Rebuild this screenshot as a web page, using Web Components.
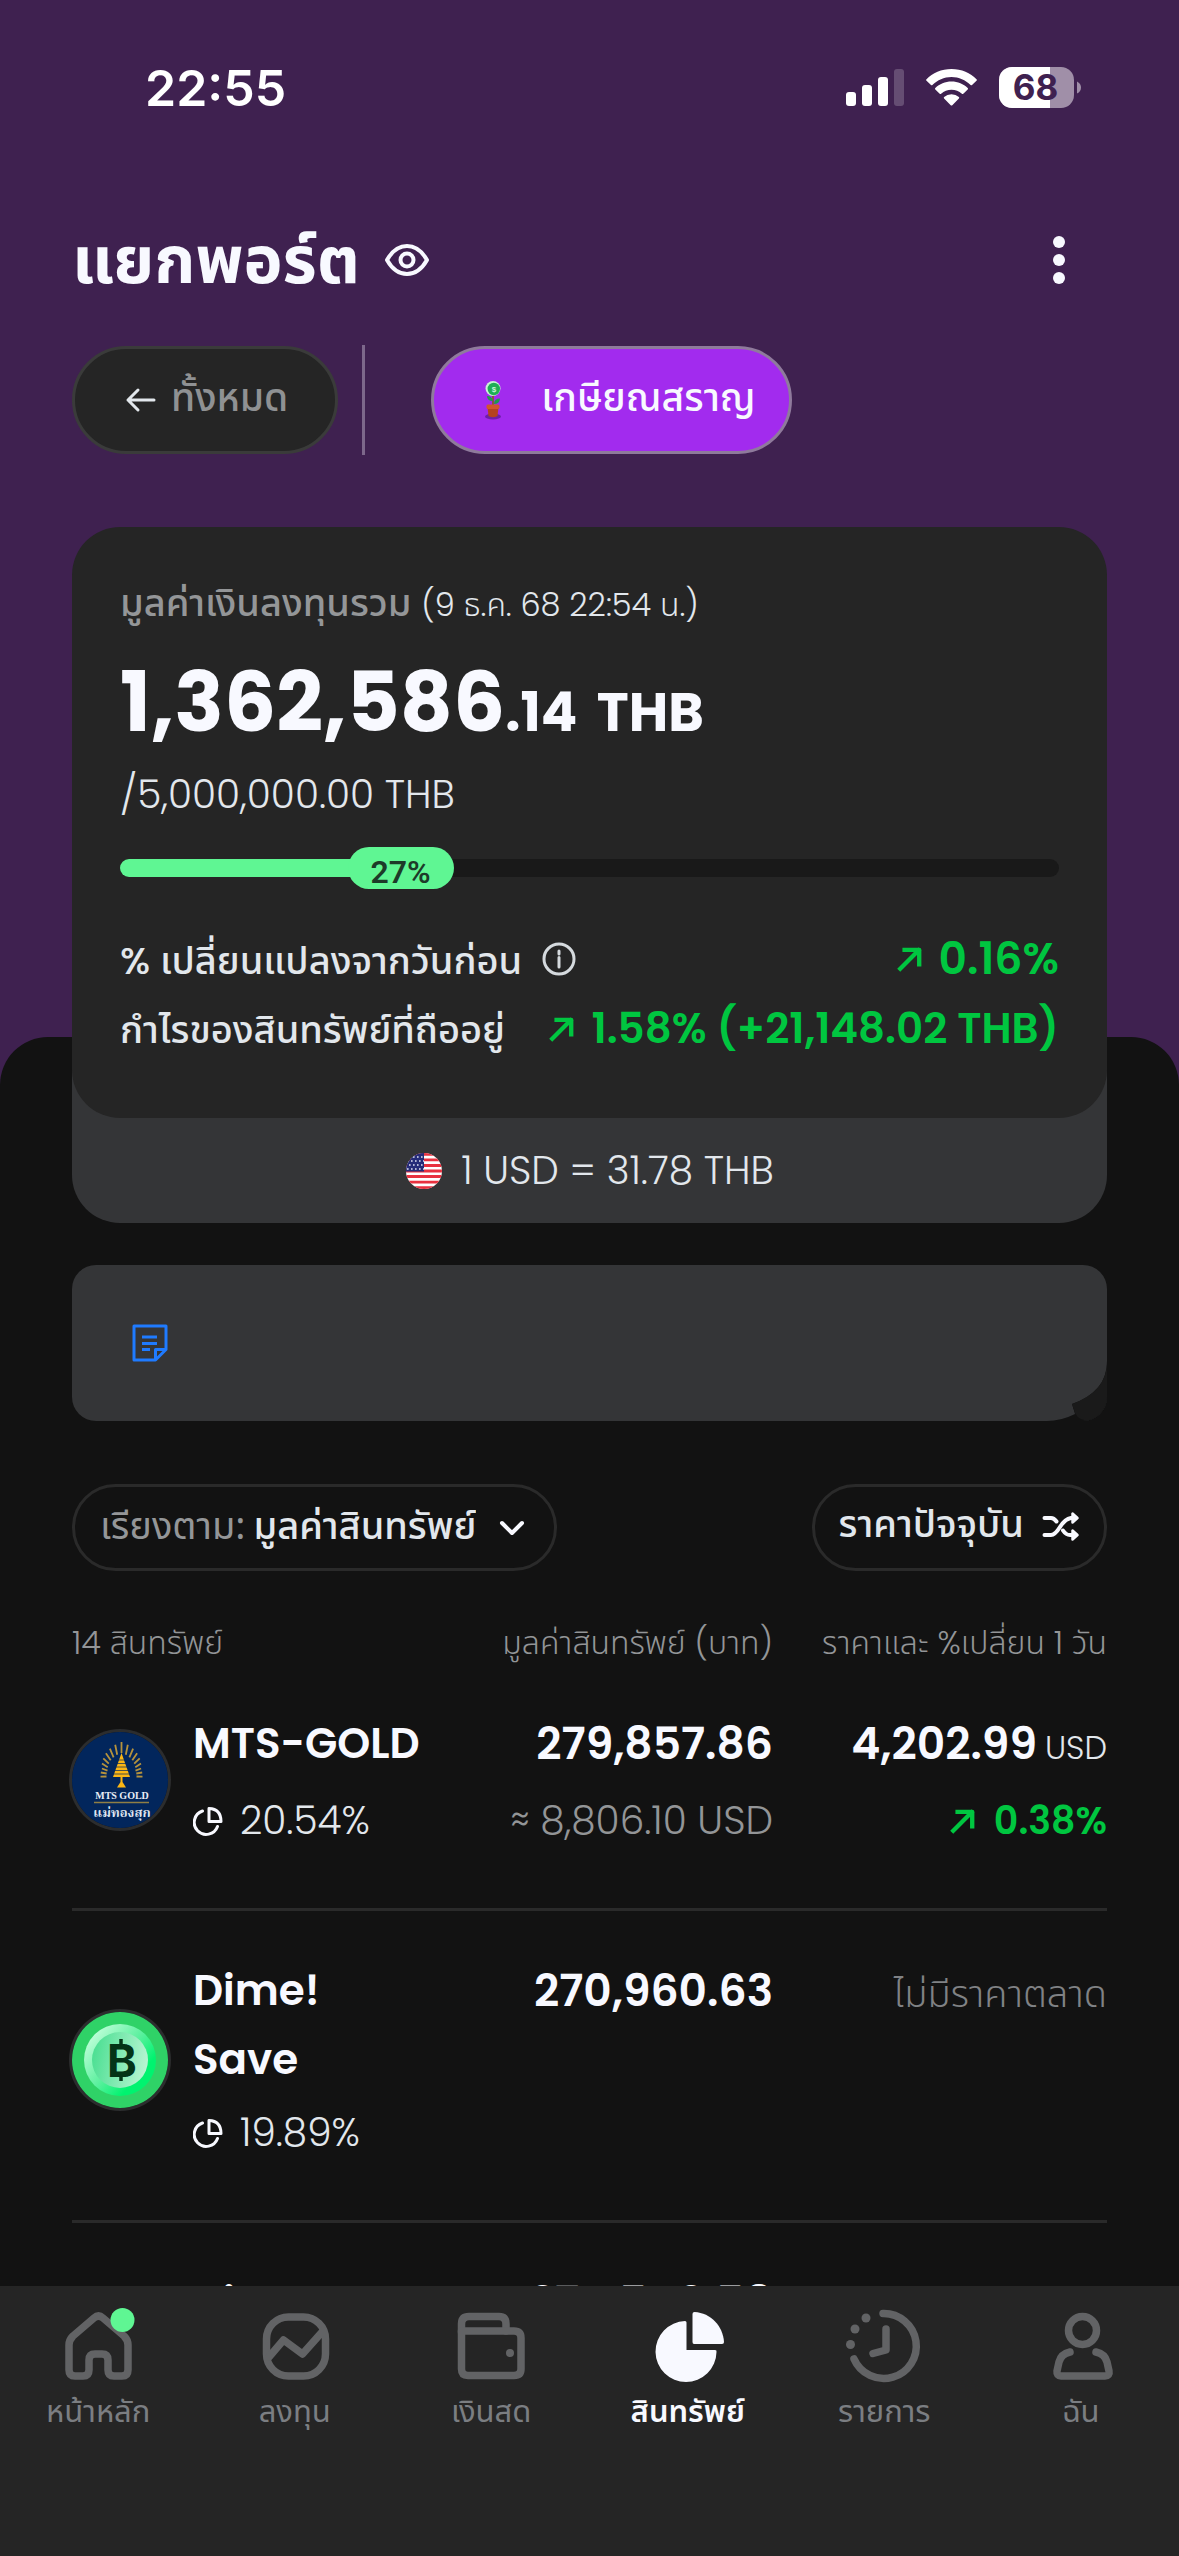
<!DOCTYPE html>
<html lang="th">
<head>
<meta charset="utf-8">
<meta name="viewport" content="width=device-width, initial-scale=1">
<title>แยกพอร์ต</title>
<style>
  html, body { margin: 0; height: 100%; }
  body {
    --purple: #3f2150; --ink: #121212; --card: #252525; --raised: #343537; --line: #2a2a2a;
    --white: #f8f9ff; --soft: #e2e7ec; --muted: #939597; --green: #00c640; --mint: #5ff693;
    --thai: "Noto Sans Thai", "Noto Sans", sans-serif;
    background: var(--purple); color: var(--white);
    font-family: Poppins, "Noto Sans Thai", "Noto Sans", sans-serif;
    font-size: 39px; -webkit-font-smoothing: antialiased;
  }
</style>
</head>
<body>
<portfolio-app></portfolio-app>
<script>
const define = (name, html) => customElements.define(name, class extends HTMLElement {
  connectedCallback() {
    if (this.shadowRoot) return;
    const root = this.attachShadow({ mode: 'open' });
    const t = document.createElement('template');
    t.innerHTML = '<style>*{box-sizing:border-box}svg{display:block;flex:none}button,select{font:inherit;color:inherit;background:none;border:0;margin:0;padding:0}</style>' +
      (typeof html === 'function' ? html(this) : html);
    root.append(t.content.cloneNode(true));
  }
});

/* Status bar */
define('status-bar', `
<style>
  :host { display: flex; align-items: center; justify-content: space-between; height: 175px; padding: 0 98px 0 145px; }
  time { font: 600 50px/60px Inter, sans-serif; color: #fff; }
  div { display: flex; align-items: center; gap: 22px; }
</style>
<time>22:55</time>
<div>
  <svg width="58" height="38" fill="#fff" aria-label="signal"><rect y="23" width="10" height="14" rx="3"/><rect x="16" y="16" width="10" height="21" rx="3"/><rect x="32" y="8" width="10" height="29" rx="3"/><rect x="48" width="10" height="37" rx="3" opacity=".2"/></svg>
  <svg width="51" height="38" viewBox="0 0 51 38" fill="#fff" aria-label="wifi"><path d="M25.500 0C35.500 0 44.500 4 50.500 10.300Q51.200 11 50.500 11.800L46 16Q45.300 16.600 44.600 16C39.500 11 33 8 25.500 8S11.500 11 6.400 16Q5.700 16.600 5 16L.5 11.800Q-.2 11 .5 10.300C6.500 4 15.500 0 25.500 0Z"/><path d="M25.500 12.500C31.800 12.500 37.500 15 41.700 19Q42.400 19.700 41.700 20.500L37.300 24.800Q36.600 25.400 35.900 24.800C33 22.200 29.500 20.700 25.500 20.700S18 22.200 15.100 24.800Q14.400 25.400 13.700 24.800L9.300 20.500Q8.600 19.700 9.300 19C13.500 15 19.200 12.500 25.500 12.500Z"/><path d="M25.500 25.300Q29.800 25.300 32.900 28Q33.600 28.700 32.900 29.400L26.300 36.200Q25.500 37 24.700 36.200L18.100 29.400Q17.400 28.700 18.100 28Q21.200 25.300 25.500 25.300Z"/></svg>
  <svg width="82" height="42" viewBox="0 0 82 42" aria-label="battery"><defs><clipPath id="b"><rect width="75" height="41" rx="13"/></clipPath></defs><g clip-path="url(#b)"><rect width="75" height="41" fill="#a08fa8"/><rect width="51" height="41" fill="#fff"/></g><path d="M78 14.500Q82 16.500 82 20.500T78 26.500Z" fill="#a08fa8"/><text x="36.500" y="33" text-anchor="middle" font-family="Inter, sans-serif" font-weight="700" font-size="35" fill="#3f2150">68</text></svg>
</div>`);

/* Page header */
define('page-header', `
<style>
  :host { display: flex; align-items: center; height: 84px; margin-top: 43px; padding: 0 96px 0 72px; }
  h1 { margin: 0; font-weight: 700; font-size: 66px; line-height: 84px; }
  .eye { margin-left: 24px; }
  .more { margin-left: auto; padding: 0 18px; }
</style>
<h1><slot></slot></h1>
<button class="eye" aria-label="ซ่อนยอด"><svg width="46" height="34" viewBox="0 0 46 34" fill="none" stroke="#f8f9ff" stroke-width="4"><path d="M3 17Q11 3 23 3T43 17Q35 31 23 31T3 17Z" stroke-linejoin="round"/><circle cx="23" cy="17" r="6.500"/></svg></button>
<button class="more" aria-label="เมนู"><svg width="12" height="48" fill="#f8f9ff"><circle cx="6" cy="6" r="6"/><circle cx="6" cy="24" r="6"/><circle cx="6" cy="42" r="6"/></svg></button>`);

/* Portfolio tabs */
define('port-tabs', `
<style>
  :host { display: flex; align-items: center; height: 110px; margin-top: 43px; padding: 0 72px; font-family: var(--thai); font-weight: 500; }
  button { display: flex; align-items: center; height: 108px; padding: 0 47px 0 48px; border: 3px solid #3a3b3a; border-radius: 54px; background: var(--card); gap: 12px; color: #8f9193; line-height: 60px; }
  i { width: 3px; height: 110px; margin: 0 66px 0 24px; background: #7d688b; }
  .on { background: #a22bee; border-color: #8f7a9c; color: var(--white); padding: 0 33px 0 36px; gap: 25px; }
</style>
<button><svg width="36" height="36" viewBox="0 0 36 36" fill="none" stroke="#e2e7ec" stroke-width="3" stroke-linecap="round" stroke-linejoin="round"><path d="M31 18H5M15 8L5 18L15 28"/></svg>ทั้งหมด</button>
<i></i>
<button class="on"><svg width="46" height="40" viewBox="0 0 46 40"><ellipse cx="23" cy="36.500" rx="8" ry="3" fill="#6d1fa8"/><path d="M23 14V26" stroke="#8a5a2a" stroke-width="1.800"/><path d="M23 21Q17 21 17 16Q22 16 23 21ZM24 24Q24 18.500 30 18.500Q29.500 24 24 24Z" fill="#1f9a4c"/><circle cx="23" cy="8.500" r="7.500" fill="#c9f5d6"/><circle cx="23.800" cy="9" r="6.200" fill="#1fae55"/><text x="24" y="12" font-size="8" font-weight="700" text-anchor="middle" fill="#c9f5d6" font-family="Liberation Sans">$</text><path d="M17.500 27H28.500L27.500 36Q23 38.500 18.500 36Z" fill="#b5421f"/><rect x="16.500" y="24.500" width="13" height="4.500" rx="1.500" fill="#d1562b"/></svg>เกษียณสราญ</button>`);

const UP = s => `<svg width="${s}" height="${s}" viewBox="0 0 24 24" fill="none" stroke="#00c640" stroke-width="4" stroke-linejoin="round" stroke-linecap="square"><path d="M3 21L20 4M7 3.500H20.500V17"/></svg>`;

/* Total value card */
define('value-card', `
<style>
  :host { display: block; position: relative; z-index: 1; margin: 72px 72px -186px; }
  .card { position: relative; z-index: 1; background: var(--card); border-radius: 48px; padding: 46px 48px 54px; }
  .lead { line-height: 60px; font-size: 38px; color: #949698; font-weight: 500; }
  .lead span { font-size: 32px; font-weight: 300; color: var(--soft); }
  .total { margin-top: 8px; height: 120px; line-height: 120px; font-size: 82px; font-weight: 700; }
  .total small { font-size: 54px; line-height: 1; }
  .total .cur { margin-left: 8px; }
  .goal { line-height: 64px; font-weight: 300; color: var(--soft); }
  .bar { display: grid; align-items: center; margin: 20px 0 35px; }
  .bar > * { grid-area: 1 / 1; }
  .track { height: 18px; border-radius: 9px; background: #191919; }
  .fill { display: flex; align-items: center; }
  .fill i { width: calc(27% - 5px); height: 18px; border-radius: 9px; background: var(--mint); }
  .fill b { margin-left: -21px; padding: 4px 23px 0; height: 42px; border-radius: 21px; background: var(--mint); color: #1d3b29; font: 600 32px/42px Roboto, sans-serif; }
  .row { display: flex; align-items: baseline; height: 70px; line-height: 70px; font-size: 38px; font-weight: 500; color: var(--soft); }
  .row svg { align-self: center; }
  .row .info { margin-left: 20px; align-self: center; }
  .up { display: flex; align-items: baseline; gap: 16px; margin-left: auto; font-size: 44px; font-weight: 600; color: var(--green); }
  .gain { font-size: 42px; }
  .fx { display: flex; align-items: center; justify-content: center; gap: 18px; margin-top: -60px; padding-top: 60px; height: 165px; border-radius: 0 0 48px 48px; background: var(--raised); font-weight: 300; color: var(--soft); line-height: 60px; }
</style>
<section class="card">
  <div class="lead">มูลค่าเงินลงทุนรวม <span>(9 ธ.ค. 68 22:54 น.)</span></div>
  <div class="total">1,362,586<small>.14 <span class="cur">THB</span></small></div>
  <div class="goal">/5,000,000.00 THB</div>
  <div class="bar" role="progressbar" aria-valuenow="27" aria-valuemin="0" aria-valuemax="100"><div class="track"></div><div class="fill"><i></i><b>27%</b></div></div>
  <div class="row"><span>% เปลี่ยนแปลงจากวันก่อน</span><button class="info" aria-label="ข้อมูล"><svg width="34" height="34" viewBox="0 0 34 34" fill="none" stroke="#d5dade" stroke-width="3"><circle cx="17" cy="17" r="15"/><path d="M17 15.500V25M17 9V12" stroke-linecap="round"/></svg></button><span class="up">${UP(26)}<span>0.16%</span></span></div>
  <div class="row"><span>กำไรของสินทรัพย์ที่ถืออยู่</span><span class="up gain">${UP(26)}<span>1.58% (+21,148.02 THB)</span></span></div>
</section>
<div class="fx"><svg width="38" height="38" viewBox="0 0 38 38"><defs><clipPath id="f"><circle cx="19" cy="19" r="18"/></clipPath></defs><g clip-path="url(#f)"><rect width="38" height="38" fill="#fff"/><path d="M0 2.400H38M0 7.900H38M0 13.500H38M0 19H38M0 24.500H38M0 30.100H38M0 35.600H38" stroke="#e8313f" stroke-width="2.900"/><rect width="19" height="19.500" fill="#252c78"/><path d="M4 5H19M2 9H19M4 13H19M2 17H19" stroke="#dfe2f2" stroke-width="1.600" stroke-dasharray="1.600 2.400"/></g></svg><span>1 USD = 31.78 THB</span></div>`);

/* Note strip with a turned-up corner */
define('note-card', `
<style>
  :host { display: flex; align-items: center; position: relative; height: 156px; padding: 0 60px; border-radius: 24px; background: var(--raised); overflow: hidden; }
  .fold { position: absolute; right: 0; bottom: 0; }
</style>
<svg width="36" height="38" viewBox="0 0 36 38" fill="none" stroke="#1f7bff" stroke-width="3" stroke-linejoin="round"><path d="M2 2H34V25.500L23.500 36H2Z"/><path d="M34 25.500H23.500V36M10 13H25M10 19.500H25M10 25.500H18"/></svg>
<svg class="fold" width="60" height="60" viewBox="0 0 60 60"><path d="M60 0V60H0Q14 60 28 53L25 43Q60 31 60 0Z" fill="#121212"/><path d="M60 4V42Q60 58.500 42 59.500Q32 59.500 28.500 53L25 43Q58 31 60 4Z" fill="#1a1a1a"/></svg>`);

/* Sort and price-mode controls */
define('sort-bar', `
<style>
  :host { display: flex; justify-content: space-between; margin-top: 63px; font-size: 38px; }
  label, button { display: flex; align-items: center; height: 87px; border: 3px solid var(--line); border-radius: 44px; color: var(--soft); line-height: 66px; font-family: var(--thai); }
  label { padding: 0 28px 0 25px; font-weight: 400; color: #949698; }
  select { appearance: none; margin-left: 8px; color: var(--soft); font-weight: 500; line-height: 66px; height: 66px; outline: 0; }
  label svg { margin-left: 22px; }
  button { padding: 0 24px 4px 24px; gap: 18px; font-weight: 500; }
</style>
<label>เรียงตาม:<select><option>มูลค่าสินทรัพย์</option></select><svg width="28" height="18" viewBox="0 0 28 18" fill="none" stroke="#f8f9ff" stroke-width="4" stroke-linecap="round" stroke-linejoin="round"><path d="M4 4L14 14L24 4"/></svg></label>
<button>ราคาปัจจุบัน<svg width="38" height="30" viewBox="0 0 38 30" fill="none" stroke="#f8f9ff" stroke-width="4" stroke-linecap="round" stroke-linejoin="round"><path d="M2.500 7H9Q12 7 14.500 10.500M2.500 24H9Q13 24 18 16T29 7H33M21 19.500Q24 24 28 24H33"/><path d="M30.500 2.500V11.500L35.500 7ZM30.500 19.500V28.500L35.500 24Z" fill="#f8f9ff" stroke-width="2.500"/></svg></button>`);

const rays = Array.from({ length: 17 }, (_, i) => {
  const a = (i - 8) * 11.500 * Math.PI / 180, k = Math.cos(a), top = Math.max(0, 1 - Math.abs(i - 8) / 6);
  const r1 = 15 + 8 * top, r2 = 21 + 13 * top;
  const p = r => `${(49.500 + r * Math.sin(a)).toFixed(1)} ${(44 - r * k).toFixed(1)}`;
  return `M${p(r1)}L${p(r2)}`;
}).join('');
const logos = {
  gold: `<svg width="96" height="96" viewBox="0 0 96 96"><circle cx="48" cy="48" r="48" fill="#02265c"/><path d="${rays}" stroke="#b5923c" stroke-width="1.800"/><path d="M49.500 21L58 45H41Z" fill="#fbb615"/><path d="M40 28H59M40 31.500H59M40 35H59M40 38.500H59M40 42H59" stroke="#02265c" stroke-width=".7"/><path d="M48.500 45H50.500V50L54 55.500H45L48.500 50Z" fill="#fbb615"/><text x="50" y="67" text-anchor="middle" font-family="Liberation Serif" font-weight="700" font-size="10" fill="#e9edf5">MTS GOLD</text><path d="M22 70.500H77" stroke="#8f7f45" stroke-width="1.500"/><text x="50" y="85" text-anchor="middle" font-family="Noto Serif Thai, Noto Sans Thai, serif" font-weight="700" font-size="13" fill="#dfe5f0">แม่ทองสุก</text></svg>`,
  dime: `<svg width="96" height="96" viewBox="0 0 96 96"><defs><linearGradient id="o" x1=".1" y1=".1" x2=".9" y2=".8"><stop offset="0" stop-color="#c4ffdc"/><stop offset=".5" stop-color="#5ff0a0"/><stop offset=".85" stop-color="#00f36f"/></linearGradient><linearGradient id="n" x1="0" y1=".4" x2="1" y2=".6"><stop offset="0" stop-color="#4bdf92"/><stop offset="1" stop-color="#b9f5d3"/></linearGradient></defs><circle cx="48" cy="48" r="48" fill="#2fd267"/><circle cx="48" cy="48" r="36" fill="url(#o)"/><circle cx="48" cy="48" r="28" fill="url(#n)"/><text x="50" y="64.500" text-anchor="middle" font-family="Inter, sans-serif" font-weight="700" font-size="45" fill="#043417">B</text><path d="M49 27V34M49 63V69" stroke="#043417" stroke-width="3.500"/></svg>`
};
const PIE = `<svg width="30" height="30" viewBox="0 0 30 30" fill="none" stroke="#f8f9ff" stroke-width="3" stroke-linejoin="round" stroke-linecap="round"><path d="M9.500 5A12 12 0 1 0 24.500 20.500"/><path d="M16 2.500V15.500H28Q28 3 16 2.500Z"/></svg>`;
const assets = [
  { logo: 'gold', name: 'MTS-GOLD', share: '20.54%', value: '279,857.86', alt: '8,806.10 USD', price: '4,202.99', unit: 'USD', change: '0.38%' },
  { logo: 'dime', name: 'Dime! Save', share: '19.89%', value: '270,960.63', note: 'ไม่มีราคาตลาด' },
  { name: 'Dime!', value: '274,546.58' }
];

/* Asset table */
define('asset-table', `
<style>
  :host { display: block; margin-top: 48px; }
  table, thead, tbody { display: block; }
  tr { display: grid; grid-template-columns: 355fr 346fr 334fr; }
  th { padding: 0; text-align: right; font-size: 32px; font-weight: 300; line-height: 48px; color: var(--muted); white-space: nowrap; }
  th:first-child { text-align: left; }
  tbody tr { padding: 45px 0 57px; border-bottom: 3px solid var(--line); }
  tbody tr:first-child { padding-top: 42px; }
  td { display: flex; flex-direction: column; padding: 0; align-items: flex-end; gap: 13px; line-height: 69px; font-size: 44px; font-weight: 600; white-space: nowrap; }
  .asset { flex-direction: row; align-items: center; gap: 25px; }
  .logo { flex: none; width: 96px; border-radius: 50%; box-shadow: 0 0 0 3px #2c2d2e; }
  .logo:empty { box-shadow: none; }
  .stack { flex: 1; align-self: stretch; display: flex; flex-direction: column; justify-content: space-between; gap: 9px; white-space: normal; font-size: 42px; }
  .share, .alt, .chg { display: flex; align-items: center; font-size: 39px; line-height: 60px; font-weight: 300; color: var(--soft); }
  .share { gap: 17px; }
  .alt { color: var(--muted); }
  .chg { gap: 18px; font-size: 38px; color: var(--green); font-weight: 600; }
  small { margin-left: 8px; font-size: 32px; line-height: 1; font-weight: 300; color: var(--soft); }
  .none { font: 300 38px/69px var(--thai); padding-top: 5px; color: #808285; }
</style>
<table><thead><tr><th>14 สินทรัพย์</th><th>มูลค่าสินทรัพย์ (บาท)</th><th>ราคาและ %เปลี่ยน 1 วัน</th></tr></thead><tbody>${assets.map(a => `
<tr><td class="asset"><div class="logo">${logos[a.logo] || ''}</div><div class="stack"><div>${a.name}</div>${a.share ? `<div class="share">${PIE}<span>${a.share}</span></div>` : ''}</div></td>
<td><div>${a.value}</div>${a.alt ? `<div class="alt">≈ ${a.alt}</div>` : ''}</td>
<td>${a.price ? `<div>${a.price}<small>${a.unit}</small></div><div class="chg">${UP(26)}<span>${a.change}</span></div>` : a.note ? `<div class="none">${a.note}</div>` : ''}</td></tr>`).join('')}</tbody></table>`);

const nav = {
  home: '<path d="M38 14L17 32Q13 36 13 41V66Q13 72 19 72H27Q33 72 33 66V56Q33 50 39 50H46Q52 50 52 56V66Q52 72 58 72H66Q72 72 72 66V41Q72 36 68 32L47 14Q42.500 10 38 14Z"/><circle cx="66.500" cy="16" r="12" fill="#5ff693" stroke="none"/>',
  invest: '<rect x="13.500" y="13" width="59" height="59" rx="22"/><path d="M16 53L30.500 36L49.500 50L70 27"/>',
  cash: '<path d="M12.500 28V20Q12.500 12.500 20 12.500H50Q57 12.500 57 20V27"/><path d="M12.500 27H65Q72 27 72 34V65Q72 71.500 65 71.500H19Q12.500 71.500 12.500 65Z"/><circle cx="61" cy="49" r="4" fill="#626365" stroke="none"/>',
  assets: '<g fill="#f8f9ff" stroke="none"><path d="M39 17Q40.500 17 40.500 18.500V46H69Q71 46 70.500 48A30.500 30.500 0 1 1 39 17Z"/><path d="M48.500 8C65 9 77 22 78 38Q78 40 76 40H48Q46.500 40 46.500 38V10Q46.500 8 48.500 8Z"/></g>',
  list: '<path d="M41 9.500A32.500 32.500 0 1 1 12 55M44 25V46L31 49.500"/><g fill="#626365" stroke="none"><circle cx="8.500" cy="40.500" r="4.500"/><circle cx="13" cy="25" r="4.500"/><circle cx="24" cy="14" r="4.500"/></g>',
  me: '<circle cx="43.500" cy="26.500" r="14"/><path d="M31 48Q22 50 20 58L18 67Q17.500 72 22 72H66Q71 72 70 67L68 58Q66 50 57 48"/>'
};

/* One tab of the bottom bar */
define('nav-item', el => `
<style>
  :host { flex: 1 1 0; display: block; }
  a { display: flex; flex-direction: column; align-items: center; text-decoration: none; color: #7b7e82; font: 400 31px/50px var(--thai); }
  :host([active]) a { color: var(--white); font-weight: 600; }
</style>
<a href="#"><svg width="84" height="84" viewBox="0 0 84 84" fill="none" stroke="#626365" stroke-width="7.500" stroke-linecap="round" stroke-linejoin="round">${nav[el.getAttribute('icon')]}</svg><slot></slot></a>`);

define('bottom-nav', `
<style>
  :host { display: block; flex: none; position: relative; z-index: 2; height: 270px; padding-top: 18px; background: var(--card); }
  nav { display: flex; }
</style>
<nav><nav-item icon="home">หน้าหลัก</nav-item><nav-item icon="invest">ลงทุน</nav-item><nav-item icon="cash">เงินสด</nav-item><nav-item icon="assets" active>สินทรัพย์</nav-item><nav-item icon="list">รายการ</nav-item><nav-item icon="me">ฉัน</nav-item></nav>`);

define('portfolio-app', `
<style>
  :host { display: flex; flex-direction: column; height: 100vh; }
  main { flex: 1; min-height: 0; overflow: hidden; }
  .sheet { min-height: 100%; padding: 228px 72px 0; border-radius: 48px 48px 0 0; background: var(--ink); }
</style>
<main>
  <status-bar></status-bar>
  <page-header>แยกพอร์ต</page-header>
  <port-tabs></port-tabs>
  <value-card></value-card>
  <div class="sheet"><note-card></note-card><sort-bar></sort-bar><asset-table></asset-table></div>
</main>
<bottom-nav></bottom-nav>`);
</script>
</body>
</html>
